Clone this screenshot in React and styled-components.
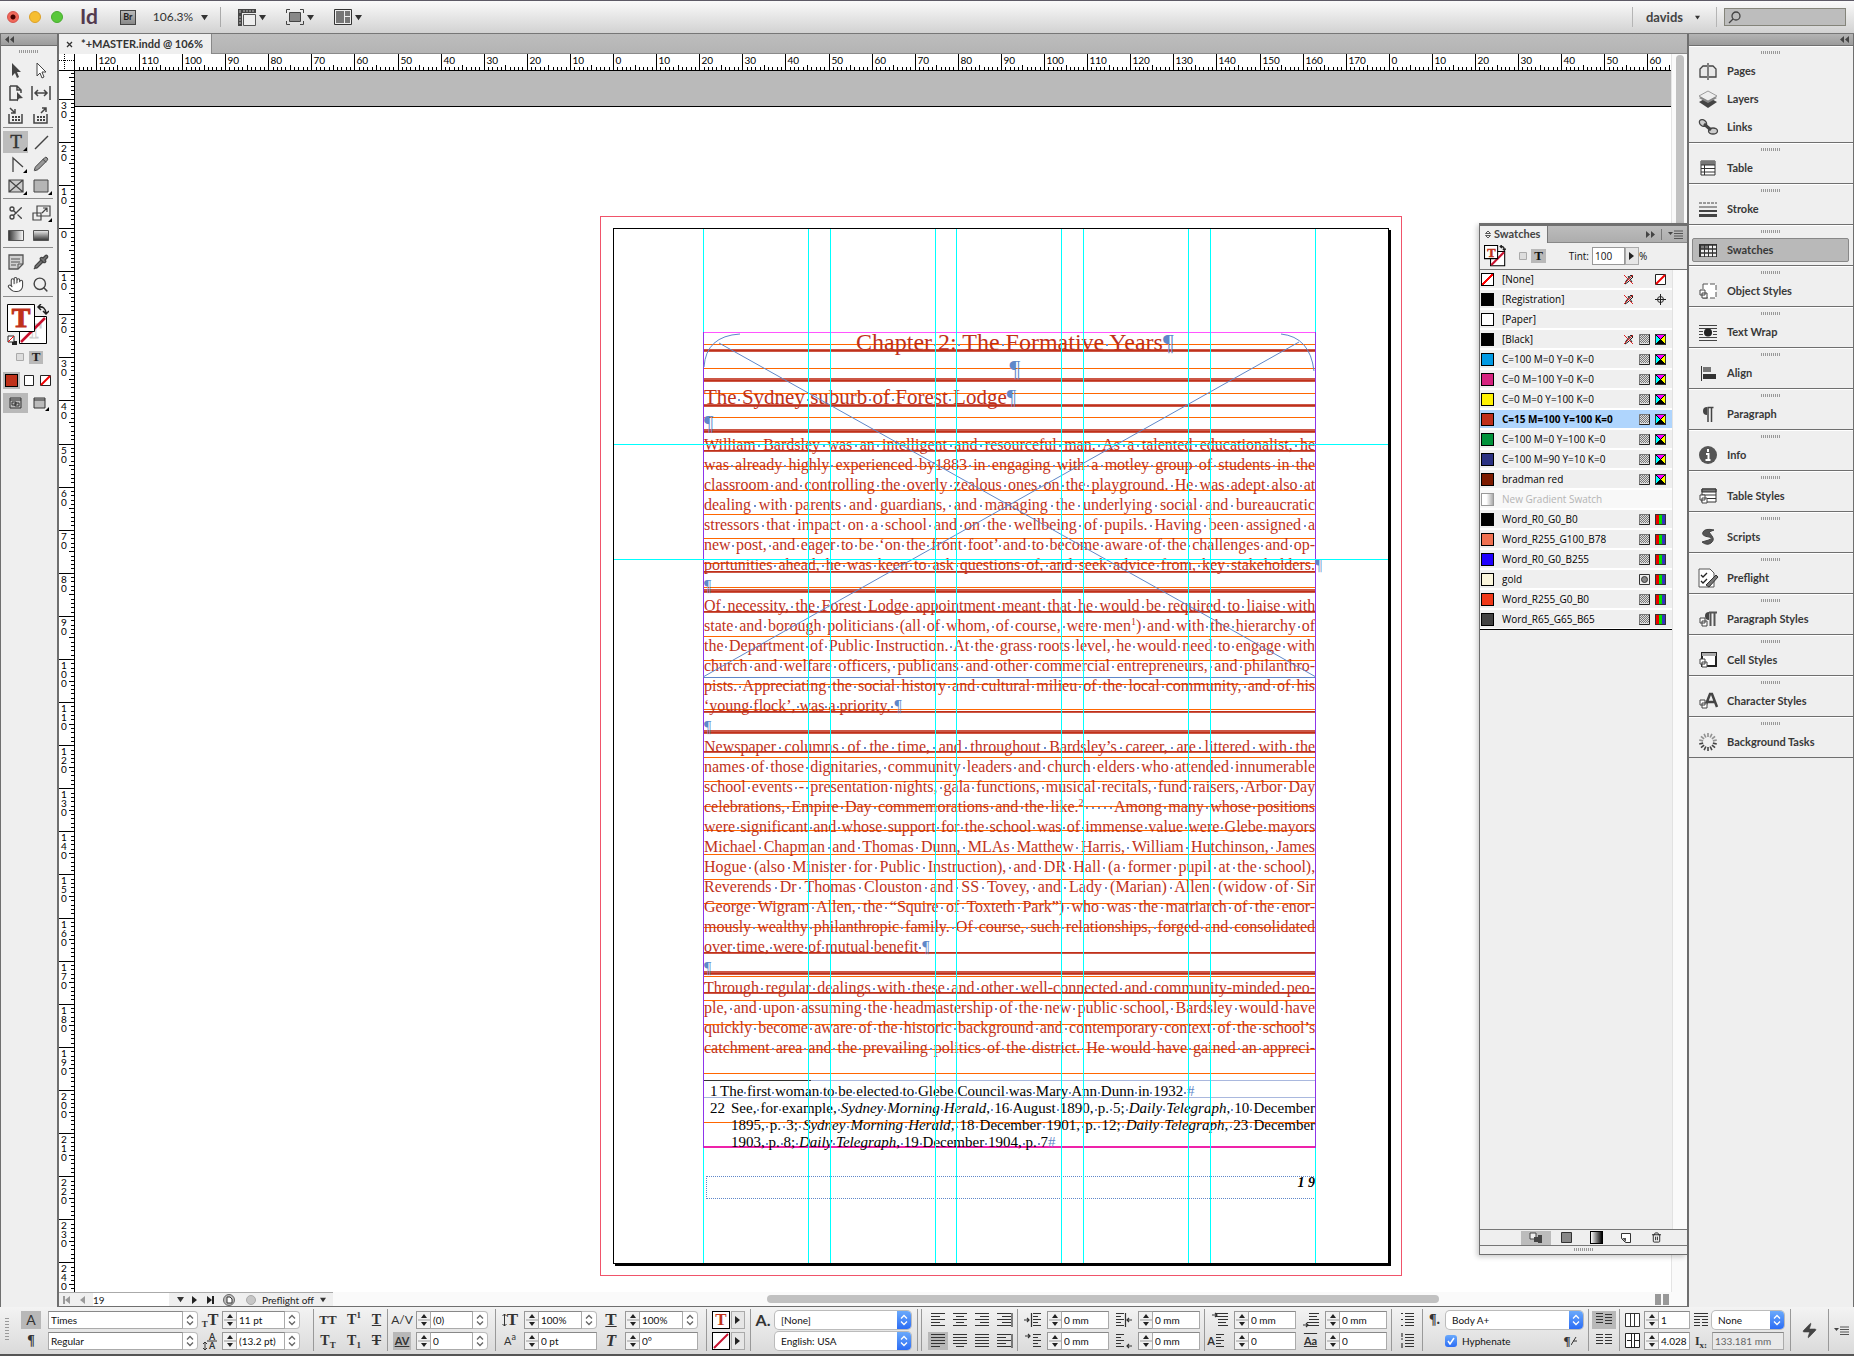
import React, { Fragment, useState } from 'react';
import styled, { createGlobalStyle, css } from 'styled-components';
import { Scissors, Pencil, Pipette, Hand, Search, Trash2, Zap } from 'lucide-react';

const UI = "Lato, 'Open Sans', sans-serif";
const SMALL = "'Open Sans', 'Noto Sans', sans-serif";
const SERIF = "'Liberation Serif', 'Times New Roman', serif";
const INK = '#bf311a';
const MARK = '#5f87c9';
const EDGE = '#6f6f6f';

const GlobalStyle = createGlobalStyle`
  * { box-sizing: border-box; }
  body { margin: 0; background: #efefef; font: 10px/12px ${UI}; color: #222; }
  button, input, select { font: inherit; color: inherit; margin: 0; padding: 0; border: 0; border-radius: 0; background: none; }
  svg { display: block; flex: none; }
  ul { list-style: none; margin: 0; padding: 0; }
`;

/* ---------- shell ---------- */
const Window = styled.div`
  display: grid;
  grid-template-rows: 33px minmax(0, 1fr) 49px;
  height: 100vh;
  border-top: 1px solid #5d5a66;
`;
const Middle = styled.div`
  display: flex;
  min-height: 0;
`;

/* ---------- title bar ---------- */
const TitleBar = styled.header`
  display: flex;
  align-items: center;
  padding: 0 8px 0 7px;
  background: linear-gradient(#fafafa, #d2d2d2);
  border-bottom: 1px solid #777;
`;
const Light = styled.button`
  width: 12px;
  height: 12px;
  margin-right: 10px;
  border-radius: 50%;
  border: 1px solid ${p => p.$edge};
  background: ${p => p.$color};
`;
const Logo = styled.span`
  margin: 0 22px 2px 7px;
  font: 700 21px/24px ${UI};
  color: #533a4e;
`;
const Bridge = styled.button`
  width: 16px;
  height: 15px;
  border: 1px solid #444;
  background: linear-gradient(#bbb, #888);
  font: 700 9px/12px ${UI};
`;
const Zoom = styled.button`
  display: flex;
  align-items: center;
  gap: 8px;
  margin-left: 17px;
  padding-right: 12px;
  height: 20px;
  border-right: 1px solid #aaa;
  font-size: 12px;
  color: #333;
`;
const ViewButton = styled.button`
  display: flex;
  align-items: center;
  gap: 3px;
  margin-left: 17px;
  & + & {
    margin-left: 20px;
  }
`;
const Account = styled.button`
  display: flex;
  align-items: center;
  gap: 12px;
  height: 20px;
  margin-left: auto;
  padding: 0 16px 0 13px;
  border: solid #b5b5b5;
  border-width: 0 1px;
  font: 700 13px/16px ${UI};
  color: #444;
`;
const SearchBox = styled.label`
  display: flex;
  align-items: center;
  width: 122px;
  height: 18px;
  margin-left: 7px;
  padding-left: 3px;
  border: 1px solid #84847a;
  background: #bdbdbd;
  input {
    flex: 1;
    min-width: 0;
    outline: none;
  }
`;

/* ---------- toolbox ---------- */
const Tools = styled.aside`
  width: 59px;
  flex: none;
  border-left: 1px solid ${EDGE};
  border-right: 2px solid ${EDGE};
  background: #efefef;
`;
const DockHead = styled.div`
  display: flex;
  align-items: center;
  justify-content: ${p => p.$side || 'flex-start'};
  height: 12px;
  padding: 0 4px;
  border-bottom: 1px solid ${EDGE};
  background: linear-gradient(#b4b4b4, #9c9c9c);
`;
const Grip = styled.div`
  width: 20px;
  height: 3px;
  margin: ${p => p.$margin || '0 auto'};
  background: repeating-linear-gradient(90deg, #999 0 1px, transparent 1px 2px);
`;
const ToolGroup = styled.div`
  display: grid;
  grid-template-columns: 25px 25px;
  grid-auto-rows: 22px;
  width: 50px;
  margin: 0 0 3px 2px;
  border-bottom: 1px solid #8d8d8d;
  padding-bottom: 1px;
`;
const Tool = styled.button`
  display: flex;
  align-items: center;
  justify-content: center;
  background: ${p => (p.$on ? '#bcbcbc' : 'none')};
  color: #444;
`;
const FillBox = styled.div`
  padding: 4px 0 0 6px;
  height: 47px;
`;
const ModeRow = styled.div`
  display: flex;
  height: ${p => p.$h}px;
  align-items: center;
  padding-left: ${p => p.$pad}px;
`;
const Mode = styled.button`
  display: flex;
  align-items: center;
  justify-content: center;
  width: ${p => p.$w}px;
  height: ${p => p.$h}px;
  background: ${p => (p.$on ? '#b9b9b9' : 'none')};
  font: 700 13px/12px ${SERIF};
`;

/* ---------- workspace ---------- */
const Workspace = styled.main`
  position: relative;
  display: grid;
  grid-template-rows: 20px minmax(0, 1fr) 15px;
  flex: 1;
  min-width: 0;
`;
const TabBar = styled.div`
  display: flex;
  background: linear-gradient(#bdbdbd, #b4b4b4);
  border-bottom: 1px solid #8a8a8a;
`;
const Tab = styled.div`
  display: flex;
  align-items: center;
  gap: 8px;
  height: 20px;
  padding: 0 8px 0 7px;
  border-right: 1px solid #888;
  background: #efefef;
  font: 700 11px/14px ${UI};
  color: #333;
`;
const View = styled.div`
  display: grid;
  grid-template-columns: 16px minmax(0, 1fr) 16px;
  grid-template-rows: 17px minmax(0, 1fr);
`;
const Corner = styled.div`
  background: #fff;
  border: solid #000;
  border-width: 0 1px 1px 0;
`;
const TopRuler = styled.div`
  background: #fff;
  border-bottom: 1px solid #000;
  svg {
    width: 100%;
    height: 16px;
  }
`;
const SideRuler = styled.div`
  background: #fff;
  border-right: 1px solid #000;
  svg {
    width: 15px;
    height: 100%;
  }
`;
const ScrollTrack = styled.div`
  grid-column: 3;
  grid-row: 1 / 3;
  padding: 1px 4px;
  border-left: 1px solid #e4e4e4;
  background: #fafafa;
`;
const VThumb = styled.div`
  width: 8px;
  height: 260px;
  border-radius: 4px;
  background: #c1c1c1;
`;
const Pasteboard = styled.div`
  position: relative;
  overflow: hidden;
  background: linear-gradient(#bababa 35px, #000 35px 36px, #fff 36px);
`;
const Spread = styled.div`
  position: absolute;
  left: 525px;
  top: 145px;
  width: 802px;
  height: 1060px;
  border: 1px solid #f0536a;
`;
const Page = styled.div`
  position: absolute;
  left: 12px;
  top: 11px;
  width: 776px;
  height: 1036px;
  border: 1px solid #000;
  box-shadow: 2px 2px 0 #000;
  background: #fff;
`;
const Overlay = styled.svg`
  position: absolute;
  left: 0;
  top: 0;
  pointer-events: none;
`;
const Story = styled.article`
  position: absolute;
  left: 89px;
  top: 103px;
  width: 613px;
  height: 816px;
  border: solid #8d35ea;
  border-width: 0 1px;
  font: 16px/20px ${SERIF};
  color: ${INK};
`;
const Title = styled.h1`
  margin: 0;
  font: 24px/21px ${SERIF};
  text-align: center;
`;
const Subtitle = styled.h2`
  margin: 0;
  font: 21px/28px ${SERIF};
`;
const Blank = styled.div`
  height: ${p => p.$h}px;
  font-size: ${p => p.$size}px;
  line-height: ${p => p.$h}px;
  text-align: ${p => p.$align || 'left'};
`;
const Mark = styled.span`
  display: inline-block;
  width: 0;
  color: ${MARK};
`;
const Space = styled.span`
  background: radial-gradient(circle at center, #6d8fd0 50%, transparent 60%) center 62% / 2px 2px no-repeat;
`;
const Para = styled.p`
  margin: 0;
`;
const Line = styled.span`
  display: block;
  height: 20px;
  white-space: nowrap;
  text-align: left;
  text-align-last: ${p => (p.$last ? 'left' : 'justify')};
  sup {
    font-size: 10px;
    line-height: 0;
    vertical-align: 6px;
  }
`;
const Notes = styled.ol`
  list-style: none;
  margin: 25px 0 0;
  padding: 0 0 0 6px;
  font: 15px/17px ${SERIF};
  color: #000;
`;
const Note = styled.li`
  display: grid;
  grid-template-columns: ${p => p.$indent}px minmax(0, 1fr);
  ${Line} {
    height: 17px;
  }
`;
const FolioBox = styled.div`
  position: absolute;
  left: 92px;
  top: 947px;
  width: 610px;
  height: 23px;
  border: 1px dotted ${MARK};
  font: italic 700 14px/12px ${SERIF};
  text-align: right;
  color: #000;
`;

/* ---------- status bar ---------- */
const Status = styled.div`
  display: flex;
  align-items: center;
  border-bottom: 1px solid ${EDGE};
  background: #fafafa;
`;
const StatusTools = styled.div`
  display: flex;
  align-items: center;
  width: 274px;
  height: 14px;
  padding-left: 4px;
  gap: 8px;
  border-top: 1px solid #aaa;
  background: #efefef;
  button {
    display: flex;
    align-items: center;
    gap: 6px;
  }
`;
const PageField = styled.input`
  width: 76px;
  height: 13px;
  background: #fff;
  outline: none;
`;
const HTrack = styled.div`
  flex: 1;
  padding-left: 434px;
`;
const HThumb = styled.div`
  width: 672px;
  height: 8px;
  border-radius: 4px;
  background: #c1c1c1;
`;
const SplitView = styled.div`
  width: 14px;
  height: 11px;
  margin-right: 18px;
  background: linear-gradient(90deg, #999 6px, transparent 6px 8px, #999 8px);
`;

/* ---------- swatches panel ---------- */
const Panel = styled.section`
  position: absolute;
  right: 0;
  top: 189px;
  bottom: 52px;
  display: flex;
  flex-direction: column;
  width: 208px;
  border: 1px solid ${EDGE};
  border-top-width: 3px;
  border-right: 0;
  background: #efefef;
  box-shadow: -2px 2px 5px rgba(0, 0, 0, 0.2);
`;
const PanelTabs = styled.div`
  display: flex;
  align-items: center;
  height: 17px;
  flex: none;
  padding-right: 4px;
  gap: 6px;
  background: linear-gradient(#bcbcbc, #adadad);
  border-bottom: 1px solid #888;
`;
const PanelTab = styled.h2`
  display: flex;
  align-items: center;
  gap: 3px;
  height: 17px;
  margin: 0 auto 0 0;
  padding: 0 7px 0 5px;
  border-right: 1px solid #777;
  background: #efefef;
  font: 700 11px/14px ${UI};
  color: #444;
`;
const PanelTools = styled.div`
  display: flex;
  align-items: center;
  height: 27px;
  flex: none;
  padding-left: 4px;
  border-bottom: 1px solid #777;
  font: 10px/12px ${SMALL};
  color: #111;
  label {
    margin: 0 3px 0 auto;
  }
  input {
    width: 33px;
    height: 18px;
    padding-left: 2px;
    border: 1px solid #999;
    background: #fff;
  }
`;
const Flyout = styled.button`
  display: flex;
  align-items: center;
  justify-content: center;
  width: 14px;
  height: 18px;
  border: 1px solid #aaa;
  background: #e6e6e6;
`;
const Percent = styled.span`
  width: 48px;
`;
const SwatchArea = styled.div`
  flex: 1;
  padding-right: 15px;
  background: linear-gradient(90deg, #efefef calc(100% - 15px), #e2e2e2 calc(100% - 15px) calc(100% - 14px), #fafafa calc(100% - 14px));
`;
const SwatchList = styled.ul`
  border-bottom: 1px solid #000;
  background: #fff;
`;
const SwatchRow = styled.button`
  display: grid;
  grid-template-columns: 21px minmax(0, 1fr) 16px 16px 16px;
  align-items: center;
  width: 100%;
  height: 18px;
  margin-bottom: 2px;
  padding: 0 1px;
  text-align: left;
  background: ${p => (p.$on ? '#afd5fd' : p.$dim ? '#f8f8f8' : '#efefef')};
  font: ${p => (p.$on ? 700 : 400)} 10px/12px ${SMALL};
  color: ${p => (p.$dim ? '#b4b4b4' : '#000')};
  li:last-child & {
    margin-bottom: 1px;
  }
`;
const Chip = styled.span`
  width: 13px;
  height: 13px;
  border: 1px solid ${p => (p.$dim ? '#999' : '#000')};
  background: ${p => p.$fill};
`;
const PanelFoot = styled.div`
  display: flex;
  align-items: center;
  height: 17px;
  flex: none;
  padding-left: 41px;
  border: solid #777;
  border-width: 1px 0;
`;
const FootButton = styled.button`
  display: flex;
  align-items: center;
  justify-content: center;
  width: 30px;
  height: 14px;
  background: ${p => (p.$on ? '#bcbcbc' : 'none')};
`;

/* ---------- dock ---------- */
const Dock = styled.nav`
  width: 167px;
  flex: none;
  border-left: 2px solid ${EDGE};
  border-right: 1px solid ${EDGE};
  background: #efefef;
`;
const DockGroup = styled.div`
  padding: 4px 4px 3px 3px;
  border-bottom: 1px solid ${EDGE};
  border-top: 1px solid #fff;
  height: ${p => (p.$tall ? 97 : 41)}px;
`;
const DockItem = styled.button`
  display: flex;
  align-items: center;
  gap: 7px;
  width: 100%;
  height: 24px;
  margin-bottom: 4px;
  padding-left: 5px;
  border: 1px solid ${p => (p.$on ? '#888' : 'transparent')};
  border-radius: 2px;
  background: ${p => (p.$on ? '#b9b9b9' : 'none')};
  font: 700 11px/14px ${UI};
  color: #383838;
  text-align: left;
`;
const DockGrip = styled(Grip)`
  margin-bottom: 5px;
`;

/* ---------- control bar ---------- */
const ControlBar = styled.footer`
  display: flex;
  align-items: stretch;
  padding: 2px 0 3px 0;
  border-bottom: 2px solid #555;
  background: linear-gradient(#f3f3f3, #dadada);
  overflow: hidden;
`;
const Group = styled.div`
  display: grid;
  grid-template-columns: ${p => p.$cols};
  grid-template-rows: 21px 21px;
  align-items: center;
  flex: none;
  padding: ${p => p.$pad || '0'};
  border-left: ${p => (p.$first ? 'none' : '1px solid #999')};
`;
const Field = styled.div`
  display: flex;
  align-items: center;
  height: 19px;
  input {
    flex: 1;
    min-width: 0;
    height: 18px;
    padding: 0 2px;
    border: 1px solid #aaa;
    border-top-color: #888;
    background: ${p => (p.$off ? '#e9e9e9' : '#fff')};
    color: ${p => (p.$off ? '#666' : '#111')};
    outline: none;
  }
`;
const arrows = css`
  display: flex;
  flex-direction: column;
  align-items: center;
  justify-content: center;
`;
const Spin = styled.button`
  ${arrows}
  width: 14px;
  height: 18px;
  border: 1px solid #999;
  border-right: 0;
  background: #f2f2f2;
`;
const Drop = styled.button`
  ${arrows}
  width: 15px;
  height: 18px;
  border: 1px solid #bbb;
  border-left: 0;
  border-radius: 0 4px 4px 0;
  background: #fff;
`;
const SelectWrap = styled.div`
  display: grid;
  align-items: center;
  height: 18px;
  border-radius: 4px;
  background: #fff;
  box-shadow: 0 0 0 1px #bbb;
  select {
    grid-area: 1 / 1;
    height: 18px;
    padding-left: 6px;
    appearance: none;
    outline: none;
    color: #111;
  }
`;
const SelectCap = styled.span`
  ${arrows}
  grid-area: 1 / 1;
  justify-self: end;
  width: 14px;
  height: 18px;
  border-radius: 0 4px 4px 0;
  background: linear-gradient(#6aa9fb, #2c6df5);
  pointer-events: none;
`;
const Glyph = styled.button`
  display: flex;
  align-items: center;
  justify-content: center;
  justify-self: center;
  width: ${p => p.$w || 20}px;
  height: 18px;
  background: ${p => (p.$on ? '#b8b8b8' : 'none')};
  font: ${p => p.$weight || 700} ${p => p.$size || 14}px/16px ${p => (p.$sans ? UI : SERIF)};
  font-style: ${p => (p.$italic ? 'italic' : 'normal')};
  text-decoration: ${p => p.$line || 'none'};
  color: #333;
  small {
    font-size: 9px;
    line-height: 9px;
    align-self: ${p => p.$sub || 'flex-end'};
  }
`;
const ColorButton = styled.button`
  display: flex;
  align-items: center;
  justify-content: center;
  width: 18px;
  height: 18px;
  border: 1px solid #000;
  background: #fff;
  font: 700 17px/16px ${SERIF};
  color: ${INK};
`;
const Check = styled.label`
  display: flex;
  align-items: center;
  gap: 5px;
  color: #111;
  input {
    appearance: none;
    width: 12px;
    height: 12px;
    border-radius: 3px;
    background: linear-gradient(#6aa9fb, #2c6df5);
    grid-area: 1 / 1;
  }
  svg {
    grid-area: 1 / 1;
    pointer-events: none;
  }
`;
const Tick = styled.span`
  display: grid;
  place-items: center;
`;
const HyphenRow = styled.div`
  grid-column: 1 / 3;
  display: flex;
  align-items: center;
  justify-content: space-between;
  padding: 0 3px 0 22px;
`;
const ColumnIcon = styled.div`
  display: flex;
  justify-content: center;
`;
const Tall = styled.div`
  grid-row: 1 / 3;
  display: flex;
  justify-content: center;
`;
const VGrip = styled.div`
  width: 4px;
  height: 24px;
  background: repeating-linear-gradient(#999 0 1px, transparent 1px 3px);
`;

/* ---------- small drawings ---------- */
const Down = ({ s = 7 }) => (
  <svg width={s} height={s} viewBox="0 0 8 8"><path d="M0 1h8L4 7z" fill="#333" /></svg>
);
const Right = ({ bar, dim, flip }) => (
  <svg width="7" height="8" viewBox="0 0 7 8">
    <g fill={dim ? '#999' : '#222'} transform={flip ? 'matrix(-1 0 0 1 7 0)' : undefined}>
      <path d="M0 0l5 4-5 4z" />
      {bar && <path d="M5 0h2v8H5z" />}
    </g>
  </svg>
);
const Double = ({ flip }) => (
  <svg width="9" height="7" viewBox="0 0 9 7">
    <path d="M0 0l4 3.500-4 3.500zM5 0l4 3.500-4 3.500z" fill="#444" transform={flip ? 'matrix(-1 0 0 1 9 0)' : undefined} />
  </svg>
);
const Chevrons = ({ color = '#666' }) => (
  <svg width="8" height="12" viewBox="0 0 8 12" fill="none" stroke={color} strokeWidth="1.300">
    <path d="M1 4.500l3-3 3 3M1 7.500l3 3 3-3" />
  </svg>
);
const SpinArrows = () => (
  <svg width="12" height="16" viewBox="0 0 12 16">
    <path d="M6 2l3 4H3zM6 14l3-4H3z" fill="#222" />
    <path d="M0 8h12" stroke="#999" />
  </svg>
);
const MenuIcon = () => (
  <svg width="15" height="9" viewBox="0 0 15 9">
    <path d="M0 2h5L2.500 5z" fill="#444" />
    <path d="M6 1h9M6 3.500h9M6 6h9M6 8.500h9" stroke="#555" />
  </svg>
);
// rows: [x, width] of each stroke on an 18px wide text block
const Lines = ({ rows, gap = 3, extra }) => (
  <svg width="18" height="16" viewBox="0 0 18 16" stroke="#333" fill="none">
    {rows.map(([x, w], i) => <path key={i} d={`M${x} ${i * gap + 1.5}h${w}`} />)}
    {extra && <path d={extra} strokeWidth="1.200" />}
  </svg>
);
const LEFT = [[2, 14], [2, 9], [2, 14], [2, 9], [2, 14]];
const CENTER = [[2, 14], [5, 8], [2, 14], [5, 8], [2, 14]];
const RIGHT = [[2, 14], [7, 9], [2, 14], [7, 9], [2, 14]];
const FULL = [[2, 14], [2, 14], [2, 14], [2, 14], [2, 14]];
const JLEFT = [[2, 14], [2, 14], [2, 14], [2, 14], [2, 9]];
const JCENTER = [[2, 14], [2, 14], [2, 14], [2, 14], [5, 8]];
const INDENT = [[9, 8], [9, 5], [9, 8], [9, 5], [9, 8]];
const OUTDENT = [[1, 8], [1, 5], [1, 8], [1, 5], [1, 8]];

const tools = {
  select: <path d="M8 3v13l3-3 2 5 2-1-2-5h4z" fill="#444" />,
  direct: <path d="M8 3v13l3-3 2 5 2-1-2-5h4z" fill="#fff" stroke="#444" />,
  page: <><path d="M6 4h7l4 4v3M6 4v14h8M13 4v4h4" fill="none" stroke="#444" strokeWidth="1.500" /><path d="M13 10l6 6-4 .5-2 3z" fill="#444" /></>,
  gap: <path d="M3 4v14M21 4v14M6 11h12M9 8l-3 3 3 3M15 8l3 3-3 3" fill="none" stroke="#444" strokeWidth="1.500" />,
  collect: <><path d="M5 10v9h13v-9M6 4l5 5M11 5v4H7" fill="none" stroke="#444" strokeWidth="1.500" /><path d="M8 13h8M8 16h8" stroke="#444" strokeWidth="2" strokeDasharray="2 1" /></>,
  place: <><path d="M5 10v9h13v-9M12 9l5-5M13 4h4v4" fill="none" stroke="#444" strokeWidth="1.500" /><path d="M8 13h8M8 16h8" stroke="#444" strokeWidth="2" strokeDasharray="2 1" /></>,
  line: <path d="M6 18L19 5" stroke="#444" strokeWidth="1.500" />,
  pen: <path d="M9 19V5l10 9" fill="none" stroke="#444" strokeWidth="1.300" />,
  frame: <path d="M5 5h14v12H5zM5 5l14 12M19 5L5 17" fill="#ccc" stroke="#444" strokeWidth="1.200" />,
  rect: <path d="M5 5h14v12H5z" fill="#b5b5b5" stroke="#444" />,
  transform: <path d="M8 4h13v10H8zM4 11h8v7H4zM13 11l5-5M14 6h4v4" fill="none" stroke="#444" strokeWidth="1.200" />,
  note: <><path d="M5 4h14v9l-5 5H5z" fill="#d0d0d0" stroke="#555" strokeWidth="1.300" /><path d="M14 18v-5h5M7 8h9M7 11h9M7 14h5" fill="none" stroke="#555" /></>,
};
const ToolIcon = ({ name, more }) => (
  <svg width="24" height="22" viewBox="0 0 24 22">
    {tools[name]}
    {more && <path d="M23 16v4h-4z" fill="#000" />}
  </svg>
);
const Gradient = ({ fade }) => (
  <svg width="16" height="11" viewBox="0 0 16 11">
    <defs>
      <linearGradient id={fade ? 'gf' : 'gs'} x2={fade ? 0 : 1} y2={fade ? 1 : 0}>
        <stop stopColor={fade ? '#eee' : '#333'} /><stop offset="1" stopColor={fade ? '#333' : '#fff'} />
      </linearGradient>
    </defs>
    <path d="M.5.5h15v10H.5z" fill={`url(#${fade ? 'gf' : 'gs'})`} stroke="#555" />
  </svg>
);
const FillStroke = ({ size = 42, bare }) => (
  <svg width={size} height={size} viewBox="0 0 42 42">
    <path d="M12.500 12.500h27v27h-27z" fill="#fff" stroke="#000" strokeWidth={bare ? 2 : 1} />
    {!bare && <text x="27" y="34" textAnchor="middle" fontFamily={SERIF} fontSize="22" fontWeight="700" fill="none" stroke="#ccc">T</text>}
    <path d="M14 38l24-24" stroke="#c8102e" strokeWidth={bare ? 4 : 2.5} />
    <path d={bare ? 'M1 1h25v25H1z' : 'M.5.5h27v27H.5z'} fill="#fff" stroke="#000" strokeWidth={bare ? 2 : 1} />
    <text x="14" y={bare ? 22 : 23} textAnchor="middle" fontFamily={SERIF} fontSize={bare ? 24 : 28} fontWeight="700" fill={INK} stroke={INK}>T</text>
    <path d="M32 3q6-1 7 6M34 0l-3 3 3 3M36 7l3 3 3-3" fill="none" stroke="#222" strokeWidth={bare ? 2.5 : 1.5} />
    {!bare && (
      <>
        <path d="M5 37h5v4H5z" fill="#222" />
        <path d="M1 32h6v6H1z" fill="#fff" stroke="#222" />
        <path d="M1 38l6-6" stroke="red" />
      </>
    )}
  </svg>
);
const Slash = () => (
  <svg width="11" height="11" viewBox="0 0 11 11"><path d="M.5.5h10v10H.5z" fill="#fff" stroke="#222" /><path d="M1 10l9-9" stroke="#e00" strokeWidth="2" /></svg>
);
const NoEdit = () => (
  <svg width="11" height="11" viewBox="0 0 11 11" fill="none"><path d="M2 10l1-3 5-6 2 2-5 5zM5 2l4 6" stroke="#222" /><path d="M1 1l9 9M10 1l-9 9" stroke="#d22" /></svg>
);
const Target = () => (
  <svg width="11" height="11" viewBox="0 0 11 11" fill="none" stroke="#222"><circle cx="5.500" cy="5.500" r="3" /><path d="M5.500 0v11M0 5.500h11" /></svg>
);
const Process = () => (
  <svg width="11" height="11" viewBox="0 0 11 11">
    <path d="M0 0h11v11H0z" fill="#ddd" />
    <path d="M1 1.500h9M1 3.500h9M1 5.500h9M1 7.500h9" stroke="#777" strokeDasharray="1 1" />
    <path d="M2 2.500h8M2 4.500h8M2 6.500h8M2 8.500h8" stroke="#777" strokeDasharray="1 1" />
    <path d="M0 10.500h10.500V0" stroke="#222" fill="none" />
    <path d="M10.500.5H.5v10" stroke="#777" fill="none" />
  </svg>
);
const Spot = () => (
  <svg width="11" height="11" viewBox="0 0 11 11"><path d="M.5.5h10v10H.5z" fill="#eee" stroke="#333" /><circle cx="5.500" cy="5.500" r="3" fill="#888" stroke="#333" /></svg>
);
const Cmyk = () => (
  <svg width="11" height="11" viewBox="0 0 11 11">
    <path d="M0 0l5.500 5.500L0 11z" fill="#0ff" /><path d="M0 0h11L5.500 5.500z" fill="#f0f" />
    <path d="M11 0v11L5.500 5.500z" fill="#ff0" /><path d="M0 11h11L5.500 5.500z" fill="#000" />
    <path d="M0 0l11 11M11 0L0 11" stroke="#000" />
    <path d="M.5.5h10v10H.5z" fill="none" stroke="#333" />
  </svg>
);
const Rgb = () => (
  <svg width="11" height="11" viewBox="0 0 11 11">
    <path d="M0 0h4v11H0z" fill="#e00" /><path d="M4 0h3v11H4z" fill="#0d0" /><path d="M7 0h4v11H7z" fill="#33b" />
    <path d="M.5.5h10v10H.5z" fill="none" stroke="#333" />
  </svg>
);

const badge = <path d="M4 12h5v5H4z M2 9h5v5H2z" fill="#fff" stroke="#444" />;
const dockIcons = {
  Pages: <path d="M10 2v17M9 5H5L2 8v8h7M11 5h4l3 3v8h-7" fill="#e8e8e8" stroke="#444" strokeWidth="1.300" />,
  Layers: <><path d="M1 13l9-5 9 5-9 6z" fill="#444" /><path d="M1 9l9-5 9 5-9 5z" fill="#888" /><path d="M1 7l9-5 9 5-9 5z" fill="#eee" stroke="#777" strokeWidth=".7" /></>,
  Links: <g fill="#ccc" stroke="#444" strokeWidth="1.300"><ellipse cx="5" cy="6" rx="4" ry="3" transform="rotate(40 5 6)" /><ellipse cx="15" cy="14" rx="4.500" ry="3" /><path d="M6 7l7 6" strokeWidth="3" /></g>,
  Table: <><path d="M3 3h14v14H3z" fill="#fff" stroke="#333" /><path d="M3 3h14v4H3z" fill="#777" /><path d="M3 7h14M3 10.500h14M3 14h14M6.500 7v10" stroke="#333" /></>,
  Stroke: <g stroke="#444"><path d="M1 4h18" strokeDasharray="3 1" /><path d="M1 8h18" /><path d="M1 12h18" strokeWidth="2" /><path d="M1 16.500h18" strokeWidth="3" /></g>,
  Swatches: <><path d="M1 4h18v13H1z" fill="#333" /><path d="M3 7h15M3 11h15M3 15h15" stroke="#eee" strokeWidth="2.500" strokeDasharray="3 1" /><path d="M2 5h8v4H2z" fill="#333" opacity=".6" /></>,
  'Object Styles': <><path d="M5 3h13v14H5z" fill="#fff" stroke="#555" strokeDasharray="5 2" />{badge}</>,
  'Text Wrap': <><path d="M1 3.500h18M1 6.500h18M1 9.500h4M15 9.500h4M1 12.500h4M15 12.500h4M1 15.500h18M1 18.500h18" stroke="#444" /><circle cx="10" cy="10.500" r="4" fill="#222" /></>,
  Align: <><path d="M3.500 3v15" stroke="#333" /><path d="M5 4h8v5H5z" fill="#777" /><path d="M5 11h13v5H5z" fill="#333" /></>,
  Paragraph: <><path d="M9 3a4 4 0 000 8z" fill="#444" /><path d="M9.500 3.500h6M10 3v15M13.500 3v15" stroke="#444" fill="none" strokeWidth="1.500" /></>,
  Info: <><circle cx="10" cy="10" r="9" fill="#555" /><path d="M10 4v3M8 9h2.500v6M7.500 15h5" stroke="#fff" strokeWidth="2" fill="none" /></>,
  'Table Styles': <><path d="M4 3h14v13H4z" fill="#fff" stroke="#333" /><path d="M4 3h14v3H4zM4 9h14M4 12.500h14" fill="#777" stroke="#333" />{badge}</>,
  Scripts: <path d="M16 3q-9-2-11 2t6 5-7 5q5 4 9 1t1-7-3-4z" fill="#555" stroke="#444" />,
  Preflight: <><path d="M1 1h11l4 4v14H1z" fill="#fff" stroke="#555" /><path d="M3 7l2 2 4-4M3 13l2 2 4-4" fill="none" stroke="#222" strokeWidth="1.300" /><path d="M8 17L18 7l2 2-9 10z" fill="#777" stroke="#333" /></>,
  'Paragraph Styles': <><path d="M11 3a4 4 0 000 8z" fill="#444" /><path d="M12.500 3v14M16.500 3v14M11 3.500h8" stroke="#555" strokeWidth="2" />{badge}</>,
  'Cell Styles': <><path d="M4 3h14v13H4z" fill="#fff" stroke="#222" strokeWidth="2" /><path d="M4 3h14v3H4z" fill="#aaa" />{badge}</>,
  'Character Styles': <><path d="M7 16L12 3h2l5 13M9 11h8" fill="none" stroke="#444" strokeWidth="2.500" />{badge}</>,
  'Background Tasks': (
    <g stroke="#444" strokeWidth="1.600">
      {Array.from({ length: 14 }, (_, i) => (
        <path key={i} d="M10 1v4" transform={`rotate(${i * 25.7} 10 10)`} opacity={i > 3 && i < 11 ? 1 : 0.55} />
      ))}
    </g>
  ),
};

/* ---------- data ---------- */
const dockGroups = [
  ['Pages', 'Layers', 'Links'], ['Table'], ['Stroke'], ['Swatches'], ['Object Styles'], ['Text Wrap'], ['Align'],
  ['Paragraph'], ['Info'], ['Table Styles'], ['Scripts'], ['Preflight'], ['Paragraph Styles'], ['Cell Styles'],
  ['Character Styles'], ['Background Tasks'],
];

const noneFill = 'linear-gradient(135deg, #fff 44%, #f00 44% 56%, #fff 56%)';
const swatches = [
  { name: '[None]', fill: noneFill, lock: true, end: Slash },
  { name: '[Registration]', fill: '#000', lock: true, end: Target },
  { name: '[Paper]', fill: '#fff' },
  { name: '[Black]', fill: '#000', lock: true, mid: Process, end: Cmyk },
  { name: 'C=100 M=0 Y=0 K=0', fill: '#009ae4', mid: Process, end: Cmyk },
  { name: 'C=0 M=100 Y=0 K=0', fill: '#d6227f', mid: Process, end: Cmyk },
  { name: 'C=0 M=0 Y=100 K=0', fill: '#fff100', mid: Process, end: Cmyk },
  { name: 'C=15 M=100 Y=100 K=0', fill: '#bf2f1c', mid: Process, end: Cmyk },
  { name: 'C=100 M=0 Y=100 K=0', fill: '#00923a', mid: Process, end: Cmyk },
  { name: 'C=100 M=90 Y=10 K=0', fill: '#2a3182', mid: Process, end: Cmyk },
  { name: 'bradman red', fill: '#7d1b00', mid: Process, end: Cmyk },
  { name: 'New Gradient Swatch', fill: 'linear-gradient(90deg, #fff 40%, #aaa)', dim: true },
  { name: 'Word_R0_G0_B0', fill: '#000', mid: Process, end: Rgb },
  { name: 'Word_R255_G100_B78', fill: '#f07050', mid: Process, end: Rgb },
  { name: 'Word_R0_G0_B255', fill: '#1f00ff', mid: Process, end: Rgb },
  { name: 'gold', fill: '#fbf6dc', mid: Spot, end: Rgb },
  { name: 'Word_R255_G0_B0', fill: '#f03818', mid: Process, end: Rgb },
  { name: 'Word_R65_G65_B65', fill: '#414141', mid: Process, end: Rgb },
];

const paragraphs = [
  [
    'William Bardsley was an intelligent and resourceful man. As a talented educationalist, he',
    'was already highly experienced by1883 in engaging with a motley group of students in the',
    'classroom and controlling the overly zealous ones on the playground. He was adept also at',
    'dealing with parents and guardians, and managing the underlying social and bureaucratic',
    'stressors that impact on a school and on the wellbeing of pupils. Having been assigned a',
    'new post, and eager to be ‘on the front foot’ and to become aware of the challenges and op-',
    'portunities ahead, he was keen to ask questions of, and seek advice from, key stakeholders.',
  ],
  [
    'Of necessity, the Forest Lodge appointment meant that he would be required to liaise with',
    'state and borough politicians (all of whom, of course, were men^1^) and with the hierarchy of',
    'the Department of Public Instruction. At the grass roots level, he would need to engage with',
    'church and welfare officers, publicans and other commercial entrepreneurs, and philanthro-',
    'pists. Appreciating the social history and cultural milieu of the local community, and of his',
    '‘young flock’, was a priority. ',
  ],
  [
    'Newspaper columns of the time, and throughout Bardsley’s career, are littered with the',
    'names of those dignitaries, community leaders and church elders who attended innumerable',
    'school events - presentation nights, gala functions, musical recitals, fund raisers, Arbor Day',
    'celebrations, Empire Day commemorations and the like.^2^     Among many whose positions',
    'were significant and whose support for the school was of immense value were Glebe mayors',
    'Michael Chapman and Thomas Dunn, MLAs Matthew Harris, William Hutchinson, James',
    'Hogue (also Minister for Public Instruction), and DR Hall (a former pupil at the school),',
    'Reverends Dr Thomas Clouston and SS Tovey, and Lady (Marian) Allen (widow of Sir',
    'George Wigram Allen, the “Squire of Toxteth Park”) who was the matriarch of the enor-',
    'mously wealthy philanthropic family. Of course, such relationships, forged and consolidated',
    'over time, were of mutual benefit ',
  ],
  [
    'Through regular dealings with these and other well-connected and community-minded peo-',
    'ple, and upon assuming the headmastership of the new public school, Bardsley would have',
    'quickly become aware of the historic background and contemporary context of the school’s',
    'catchment area and the prevailing politics of the district. He would have gained an appreci-',
  ],
];

// guide geometry, measured from the page's top left corner
const columnGuides = [89, 194, 216, 321, 342, 447, 469, 574, 596, 701];
const rowGuides = [215, 330];
const baselines = Array.from({ length: 34 }, (_, i) => Math.round(115 + i * 24.3));
const rules = [
  [120, 3], [149, 4], [175, 3], [200, 4], [221, 2], [342, 2], [360, 4], [382, 2], [482, 2], [501, 4], [522, 2], [723, 2],
  [742, 4], [763, 2],
];

/* ---------- pieces ---------- */
const Words = ({ text }) =>
  text.split(' ').map((word, i) => (
    <Fragment key={i}>
      {i > 0 && <Space>{word === '' ? '\u00a0' : ' '}</Space>}
      {word.split('^').map((part, k) => (k % 2 ? <sup key={k}>{part}</sup> : part))}
    </Fragment>
  ));

const Ruler = ({ vertical, origin, from, to, wrap }) => {
  const ticks = [];
  for (let mm = from; mm <= to; mm += 1) {
    const pos = Math.round(origin + mm * 4.31) + 0.5;
    const major = mm % 10 === 0;
    const size = major ? 16 : mm % 5 === 0 ? 5 : 3;
    ticks.push(
      <path key={mm} d={vertical ? `M${15 - size} ${pos}h${size}` : `M${pos} ${16 - size}v${size}`} stroke="#000" />,
    );
    if (major) {
      const value = String(Math.abs(wrap && mm >= wrap ? mm - wrap : mm));
      if (vertical) {
        value.split('').forEach((digit, k) => {
          ticks.push(<text key={`${mm}-${k}`} x="2" y={pos + 9 + k * 9}>{digit}</text>);
        });
      } else {
        ticks.push(<text key={`t${mm}`} x={pos + 2} y="10">{value}</text>);
      }
    }
  }
  return <svg fontFamily={UI} fontSize="10" fill="#000">{ticks}</svg>;
};

const Spinner = ({ label, value, drop }) => (
  <Field>
    <Spin aria-label={`${label} step`}><SpinArrows /></Spin>
    <input aria-label={label} defaultValue={value} />
    {drop && <Drop aria-label={`${label} list`}><Chevrons /></Drop>}
  </Field>
);
const Select = ({ label, value }) => (
  <SelectWrap>
    <select aria-label={label} defaultValue={value}><option>{value}</option></select>
    <SelectCap><Chevrons color="#fff" /></SelectCap>
  </SelectWrap>
);
const Combo = ({ label, value }) => (
  <Field>
    <input aria-label={label} defaultValue={value} />
    <Drop aria-label={`${label} list`}><Chevrons /></Drop>
  </Field>
);

const Toolbox = () => (
  <Tools>
    <DockHead><Double flip /></DockHead>
    <Grip $margin="4px auto 7px 18px" />
    <ToolGroup>
      <Tool aria-label="Selection"><ToolIcon name="select" /></Tool>
      <Tool aria-label="Direct selection"><ToolIcon name="direct" /></Tool>
      <Tool aria-label="Page"><ToolIcon name="page" /></Tool>
      <Tool aria-label="Gap"><ToolIcon name="gap" /></Tool>
      <Tool aria-label="Content collector"><ToolIcon name="collect" /></Tool>
      <Tool aria-label="Content placer"><ToolIcon name="place" /></Tool>
    </ToolGroup>
    <ToolGroup>
      <Tool aria-label="Type" $on>
        <svg width="24" height="22" viewBox="0 0 24 22">
          <text x="12" y="17" textAnchor="middle" fontFamily={SERIF} fontSize="19" fill="#333" stroke="#333" strokeWidth=".4">T</text>
          <path d="M23 16v4h-4z" />
        </svg>
      </Tool>
      <Tool aria-label="Line"><ToolIcon name="line" /></Tool>
      <Tool aria-label="Pen"><ToolIcon name="pen" more /></Tool>
      <Tool aria-label="Pencil"><Pencil size={16} fill="#999" strokeWidth={1.5} /></Tool>
      <Tool aria-label="Rectangle frame"><ToolIcon name="frame" more /></Tool>
      <Tool aria-label="Rectangle"><ToolIcon name="rect" more /></Tool>
    </ToolGroup>
    <ToolGroup>
      <Tool aria-label="Scissors"><Scissors size={16} /></Tool>
      <Tool aria-label="Free transform"><ToolIcon name="transform" more /></Tool>
      <Tool aria-label="Gradient swatch"><Gradient /></Tool>
      <Tool aria-label="Gradient feather"><Gradient fade /></Tool>
    </ToolGroup>
    <ToolGroup>
      <Tool aria-label="Note"><ToolIcon name="note" /></Tool>
      <Tool aria-label="Eyedropper"><Pipette size={16} fill="#777" /></Tool>
      <Tool aria-label="Hand"><Hand size={17} strokeWidth={1.5} fill="#fff" /></Tool>
      <Tool aria-label="Zoom"><Search size={17} /></Tool>
    </ToolGroup>
    <FillBox><FillStroke /></FillBox>
    <ModeRow $h={20} $pad={10}>
      <Mode $w={18} $h={12} aria-label="Format container">
        <svg width="9" height="9"><path d="M.5.5h7v7h-7z" fill="#ddd" stroke="#aaa" /></svg>
      </Mode>
      <Mode $w={14} $h={13} $on>T</Mode>
    </ModeRow>
    <ModeRow $h={26} $pad={2}>
      <Mode $w={17} $h={17} $on aria-label="Apply colour"><Chip $fill={INK} /></Mode>
      <Mode $w={17} $h={17} aria-label="Apply gradient">
        <svg width="10" height="11"><path d="M.5.5h9v10h-9z" fill="#fff" stroke="#222" /></svg>
      </Mode>
      <Mode $w={17} $h={17} aria-label="Apply none"><Slash /></Mode>
    </ModeRow>
    <ModeRow $h={20} $pad={2}>
      <Mode $w={25} $h={20} $on aria-label="Normal view">
        <svg width="13" height="12" viewBox="0 0 13 12" fill="none" stroke="#333"><path d="M1 1h11v10H1zM1 3h11M3 5h4v3H3zM6 6h4v3H6z" /></svg>
      </Mode>
      <Mode $w={25} $h={20} aria-label="Preview">
        <svg width="17" height="16" viewBox="0 0 17 16"><path d="M2 3h11v10H2z" fill="#bbb" stroke="#333" /><path d="M2 5h11" stroke="#333" /><path d="M17 12v4h-4z" /></svg>
      </Mode>
    </ModeRow>
  </Tools>
);

const DocumentPage = () => (
  <Spread>
    <Page>
      <Overlay width="774" height="1034">
        <g stroke="#f60">{baselines.map(y => <path key={y} d={`M89 ${y + 0.5}h613`} />)}</g>
        {rules.map(([y, h]) => (
          <g key={y}>
            <path d={`M89 ${y}h613v${h}h-613z`} fill="#cc5746" />
            <path d={`M89 ${y + h - 1.5}h613`} stroke={INK} />
          </g>
        ))}
        <path d="M89 103.500h613" stroke="#f5f" />
        <path d="M89 918h613" stroke="#e2a" strokeWidth="2" />
        <path d="M89 448.500h613" stroke={MARK} />
        <path d="M197 851.500h505M89 868.500h613" stroke="#a9b8de" />
        <path d="M89 851.500h108" stroke="#333" />
      </Overlay>
      <Story>
        <Title><Words text="Chapter 2: The Formative Years" /><Mark>¶</Mark></Title>
        <Blank $h={30} $size={24} $align="center"><Mark>¶</Mark></Blank>
        <Subtitle><Words text="The Sydney suburb of Forest Lodge" /><Mark>¶</Mark></Subtitle>
        <Blank $h={24} $size={21}><Mark>¶</Mark></Blank>
        {paragraphs.map((lines, i) => (
          <Fragment key={lines[0]}>
            {i > 0 && <Blank $h={21} $size={16}><Mark>¶</Mark></Blank>}
            <Para>
              {lines.map((line, k) => (
                <Line key={line} $last={line.length < 50}>
                  <Words text={line} />
                  {k === lines.length - 1 && i < 3 && <Mark>¶</Mark>}
                </Line>
              ))}
            </Para>
          </Fragment>
        ))}
        <Notes>
          <Note $indent={10}>
            <span>1</span>
            <Line $last><Words text="The first woman to be elected to Glebe Council was Mary Ann Dunn in 1932 " /><Mark>#</Mark></Line>
          </Note>
          <Note $indent={21}>
            <span>22</span>
            <div>
              <Line><Words text="See, for example," /><Space> </Space><i><Words text="Sydney Morning Herald" /></i><Words text=", 16 August 1890, p. 5; " /><i><Words text="Daily Telegraph" /></i><Words text=", 10 December" /></Line>
              <Line><Words text="1895, p. 3; " /><i><Words text="Sydney Morning Herald" /></i><Words text=", 18 December 1901, p. 12; " /><i><Words text="Daily Telegraph" /></i><Words text=", 23 December" /></Line>
              <Line $last><Words text="1903, p. 8; " /><i><Words text="Daily Telegraph" /></i><Words text=", 19 December 1904, p. 7" /><Mark>#</Mark></Line>
            </div>
          </Note>
        </Notes>
      </Story>
      <FolioBox>1 9</FolioBox>
      <Overlay width="774" height="1034" fill="none">
        <g stroke={MARK}>
          <path d="M90 138Q92 107 126 105M700 142Q696 108 667 105" />
          <path d="M105 114L702 448M685 113L89 448" />
        </g>
        <g stroke="#0ff">
          {columnGuides.map(x => <path key={x} d={x === 89 || x === 701 ? `M${x + 0.5} 0v103M${x + 0.5} 919v115` : `M${x + 0.5} 0v1034`} />)}
          {rowGuides.map(y => <path key={y} d={`M0 ${y + 0.5}h774`} />)}
        </g>
      </Overlay>
    </Page>
  </Spread>
);

const SwatchesPanel = () => {
  const [active, setActive] = useState('C=15 M=100 Y=100 K=0');
  return (
    <Panel>
      <PanelTabs>
        <PanelTab>
          <svg width="6" height="9" viewBox="0 0 6 9" fill="none" stroke="#555"><path d="M.5 3.500L3 1l2.500 2.500zM.5 5.500L3 8l2.500-2.500z" /></svg>
          Swatches
        </PanelTab>
        <Double />
        <svg width="1" height="11"><path d="M.5 0v11" stroke="#777" /></svg>
        <MenuIcon />
      </PanelTabs>
      <PanelTools>
        <FillStroke size={22} bare />
        <Mode $w={25} $h={14} aria-label="Container">
          <svg width="16" height="9"><path d="M8.500.5h7v7h-7z" fill="#ddd" stroke="#aaa" /></svg>
        </Mode>
        <Mode $w={15} $h={14} $on>T</Mode>
        <label htmlFor="tint">Tint:</label>
        <input id="tint" defaultValue="100" />
        <Flyout aria-label="Tint slider"><Right /></Flyout>
        <Percent>%</Percent>
      </PanelTools>
      <SwatchArea>
        <SwatchList>
          {swatches.map(({ name, fill, lock, mid: Mid, end: End, dim }) => (
            <li key={name}>
              <SwatchRow $on={name === active} $dim={dim} onClick={() => setActive(name)}>
                <Chip $fill={fill} $dim={dim} />
                <span>{name}</span>
                <span>{lock && <NoEdit />}</span>
                <span>{Mid && <Mid />}</span>
                <span>{End && <End />}</span>
              </SwatchRow>
            </li>
          ))}
        </SwatchList>
      </SwatchArea>
      <PanelFoot>
        <FootButton $on aria-label="Show all"><svg width="14" height="12" viewBox="0 0 14 12"><path d="M1 1h6v6H1z" fill="#eee" stroke="#444" /><path d="M5 5h4v5H5zM9 3h4v8H9z" fill="#444" /></svg></FootButton>
        <FootButton aria-label="Colour swatches"><svg width="11" height="11"><path d="M.5.5h10v10H.5z" fill="#888" stroke="#333" /></svg></FootButton>
        <FootButton aria-label="Gradients"><Chip $fill="linear-gradient(90deg, #fff, #000)" /></FootButton>
        <FootButton aria-label="New swatch"><svg width="10" height="10"><path d="M.5.5h9v9h-5l-4-4z" fill="#fff" stroke="#333" /><path d="M1 5h4v4z" fill="#555" /></svg></FootButton>
        <FootButton aria-label="Delete swatch"><Trash2 size={11} /></FootButton>
      </PanelFoot>
      <Grip $margin="2px auto 3px" />
    </Panel>
  );
};

const PanelDock = () => (
  <Dock>
    <DockHead $side="flex-end"><Double flip /></DockHead>
    {dockGroups.map(items => (
      <DockGroup key={items[0]} $tall={items.length > 1}>
        <DockGrip />
        {items.map(item => (
          <DockItem key={item} $on={item === 'Swatches'}>
            <svg width="22" height="20" viewBox="0 0 22 20" fill="none">{dockIcons[item]}</svg>
            {item}
          </DockItem>
        ))}
      </DockGroup>
    ))}
  </Dock>
);

const Controls = () => (
  <ControlBar>
    <Group $first $cols="14px 34px 150px 24px 78px" $pad="0 13px 0 0">
      <Tall><VGrip /></Tall>
      <Glyph $on $sans $weight={400}>A</Glyph>
      <Combo label="Font family" value="Times" />
      <Glyph $size={16}><small>T</small>T</Glyph>
      <Spinner label="Font size" value="11 pt" drop />
      <Glyph>¶</Glyph>
      <Combo label="Font style" value="Regular" />
      <Glyph aria-label="Leading icon">
        <svg width="18" height="18" viewBox="0 0 18 18" fill="#333" fontFamily={UI} fontSize="9">
          <text x="8" y="8">A</text><text x="8" y="17">A</text><path d="M6 9h10M4 10v8M2 12l2-2 2 2M2 16l2 2 2-2" stroke="#333" fill="none" />
        </svg>
      </Glyph>
      <Spinner label="Leading" value="(13.2 pt)" drop />
    </Group>
    <Group $cols="28px 24px 21px">
      <Glyph $size={13}>TT</Glyph>
      <Glyph $sub="flex-start">T<small>1</small></Glyph>
      <Glyph $line="underline">T</Glyph>
      <Glyph>T<small>T</small></Glyph>
      <Glyph>T<small>1</small></Glyph>
      <Glyph $line="line-through">T</Glyph>
    </Group>
    <Group $cols="28px 72px" $pad="0 7px 0 0">
      <Glyph $sans $weight={400} $size={12}>A/V</Glyph>
      <Spinner label="Kerning" value="(0)" drop />
      <Glyph $sans $size={11} $line="underline" $on $w={18}>AV</Glyph>
      <Spinner label="Tracking" value="0" drop />
    </Group>
    <Group $cols="28px 73px 28px 73px" $pad="0 8px 0 0">
      <Glyph $size={17}><svg width="5" height="14" viewBox="0 0 5 14" fill="none" stroke="#333"><path d="M2.500 1v12M.5 3l2-2 2 2M.5 11l2 2 2-2" /></svg>T</Glyph>
      <Spinner label="Vertical scale" value="100%" drop />
      <Glyph $size={17} $line="underline">T</Glyph>
      <Spinner label="Horizontal scale" value="100%" drop />
      <Glyph $sans $weight={400} $size={11} $sub="flex-start">A<small>a</small></Glyph>
      <Spinner label="Baseline shift" value="0 pt" />
      <Glyph $size={17} $italic>T</Glyph>
      <Spinner label="Skew" value="0°" />
    </Group>
    <Group $cols="19px 14px" $pad="0 5px">
      <ColorButton>T</ColorButton>
      <Flyout aria-label="Fill list"><Right /></Flyout>
      <ColorButton aria-label="Stroke"><svg width="16" height="16"><path d="M1 15L15 1" stroke="#c8102e" strokeWidth="2" /></svg></ColorButton>
      <Flyout aria-label="Stroke list"><Right /></Flyout>
    </Group>
    <Group $cols="24px 136px" $pad="0 6px 0 0">
      <Glyph $sans $size={16}>A.</Glyph>
      <Select label="Character style" value="[None]" />
      <span />
      <Select label="Language" value="English: USA" />
    </Group>
    <Group $cols="3px" />
    <Group $cols="22px 22px 22px 22px" $pad="0 2px 0 5px">
      <Glyph aria-label="Align left"><Lines rows={LEFT} /></Glyph>
      <Glyph aria-label="Align centre"><Lines rows={CENTER} /></Glyph>
      <Glyph aria-label="Align right"><Lines rows={RIGHT} /></Glyph>
      <Glyph aria-label="Align towards spine"><Lines rows={RIGHT} extra="M17 1v14" /></Glyph>
      <Glyph $on aria-label="Justify left"><Lines rows={JLEFT} /></Glyph>
      <Glyph aria-label="Justify centre"><Lines rows={JCENTER} /></Glyph>
      <Glyph aria-label="Justify all"><Lines rows={FULL} /></Glyph>
      <Glyph aria-label="Align away from spine"><Lines rows={LEFT} extra="M17 1v14" /></Glyph>
    </Group>
    <Group $cols="28px 62px 29px 62px" $pad="0 4px 0 1px">
      <Glyph><Lines rows={INDENT} extra="M7.500 1v14M0 8h5M3 6l2 2-2 2" /></Glyph>
      <Spinner label="Left indent" value="0 mm" />
      <Glyph><Lines rows={OUTDENT} extra="M10.500 1v14M12 8h5M14 6l-2 2 2 2" /></Glyph>
      <Spinner label="Right indent" value="0 mm" />
      <Glyph><Lines rows={INDENT} extra="M1 3h5M4 1l2 2-2 2" /></Glyph>
      <Spinner label="First line indent" value="0 mm" />
      <Glyph><Lines rows={OUTDENT} extra="M12 13h5M14 11l-2 2 2 2" /></Glyph>
      <Spinner label="Last line indent" value="0 mm" />
    </Group>
    <Group $cols="28px 62px 29px 62px" $pad="0 4px 0 1px">
      <Glyph><Lines rows={[[5, 12], [5, 12], [7, 10], [7, 8], [7, 10]]} extra="M1 3h5M4 1l2 2-2 2" /></Glyph>
      <Spinner label="Space before" value="0 mm" />
      <Glyph><Lines rows={[[7, 10], [7, 8], [7, 10], [5, 12], [5, 12]]} extra="M1 13h5M4 11l2 2-2 2" /></Glyph>
      <Spinner label="Space after" value="0 mm" />
      <Glyph $sans $size={11}>A<Lines rows={OUTDENT} /></Glyph>
      <Spinner label="Drop cap lines" value="0" />
      <Glyph $sans $size={11} $line="underline overline">Aa</Glyph>
      <Spinner label="Drop cap characters" value="0" />
    </Group>
    <Group $cols="30px">
      <Glyph aria-label="Bulleted list"><Lines rows={INDENT.map(() => [7, 9])} extra="M3 1.500h2M3 7.500h2M3 13.500h2" /></Glyph>
      <Glyph aria-label="Numbered list"><Lines rows={INDENT.map(() => [7, 9])} extra="M4 0v4M3 6h2M4 10v5" /></Glyph>
    </Group>
    <Group $cols="23px 137px" $pad="0 5px 0 0">
      <Glyph>¶.</Glyph>
      <Select label="Paragraph style" value="Body A+" />
      <HyphenRow>
        <Check>
          <Tick>
            <input type="checkbox" defaultChecked />
            <svg width="8" height="8" viewBox="0 0 8 8"><path d="M1 4l2 3 4-6" fill="none" stroke="#fff" strokeWidth="1.500" /></svg>
          </Tick>
          Hyphenate
        </Check>
        <Glyph $size={13}>¶<svg width="6" height="10" viewBox="0 0 6 10" fill="none" stroke="#333"><path d="M0 9l5-8M2 5h4" /></svg></Glyph>
      </HyphenRow>
    </Group>
    <Group $cols="30px">
      <Glyph $on $w={24} aria-label="Do not align to grid"><Lines rows={[[1, 7], [1, 7], [1, 7], [1, 7]]} extra="M10 2.500h7M10 5.500h7M10 8.500h7M10 11.500h7" /></Glyph>
      <Glyph $w={24} aria-label="Align to grid"><Lines rows={[[1, 7], [1, 7], [1, 7], [1, 7]]} extra="M10 1.500h7M10 4.500h7M10 7.500h7M10 10.500h7" /></Glyph>
    </Group>
    <Group $cols="24px 46px 22px 72px" $pad="0 6px 0 0">
      <ColumnIcon><svg width="15" height="14" fill="#fff" stroke="#333"><path d="M.5.5h14v13H.5zM5.500.5v13M9.500.5v13" /></svg></ColumnIcon>
      <Spinner label="Columns" value="1" />
      <ColumnIcon><Lines rows={[[0, 0], [2, 14], [2, 6], [2, 6], [2, 6]]} extra="M2 1.500h14M10 7.500h6M10 10.500h6M10 13.500h6" /></ColumnIcon>
      <Select label="Span columns" value="None" />
      <ColumnIcon><svg width="15" height="15" fill="#fff" stroke="#222"><path d="M.5.5h14v14H.5zM6.500 0v15M9.500 0v15M2 7.500h4M10 7.500h4" /></svg></ColumnIcon>
      <Spinner label="Gutter" value="4.028" />
      <Glyph $size={12}>I<small>x:</small></Glyph>
      <Field $off><input aria-label="Cursor position" defaultValue="133.181 mm" readOnly /></Field>
    </Group>
    <Group $cols="37px">
      <Tall><Zap size={17} fill="#444" strokeWidth={1} color="#444" /></Tall>
    </Group>
    <Group $cols="25px">
      <Tall><MenuIcon /></Tall>
    </Group>
  </ControlBar>
);

const App = () => (
  <>
    <GlobalStyle />
    <Window>
      <TitleBar>
        <Light aria-label="Close" $color="radial-gradient(#400 2px, #f0685a 3px)" $edge="#d5504a" />
        <Light aria-label="Minimise" $color="#f6be32" $edge="#dca028" />
        <Light aria-label="Zoom window" $color="#59c83b" $edge="#47ac2f" />
        <Logo>Id</Logo>
        <Bridge>Br</Bridge>
        <Zoom>106.3% <Down /></Zoom>
        <ViewButton aria-label="View options">
          <svg width="18" height="17" viewBox="0 0 18 17"><path d="M0 0h18v4H4v13H0z" fill="#444" /><path d="M5.500 5.500h12v11h-12z" fill="#eee" stroke="#555" /><path d="M2 1v3M6 1v2M9 1v2M12 1v2M15 1v2M1 8h2M1 11h2M1 14h2" stroke="#bbb" /></svg>
          <Down />
        </ViewButton>
        <ViewButton aria-label="Screen mode">
          <svg width="18" height="16" viewBox="0 0 18 16"><path d="M.5 4V.5H4M14 .5h3.500V4M17.500 12v3.500H14M4 15.500H.5V12" fill="none" stroke="#444" /><path d="M3.500 3.500h11v9h-11z" fill="#888" stroke="#444" /></svg>
          <Down />
        </ViewButton>
        <ViewButton aria-label="Arrange documents">
          <svg width="18" height="16" viewBox="0 0 18 16"><path d="M.5.5h17v15H.5z" fill="#eee" stroke="#333" /><path d="M2 2h8v12H2zM11 2h5v5h-5zM11 8h5v6h-5z" fill="#777" /></svg>
          <Down />
        </ViewButton>
        <Account>davids <Down s={5} /></Account>
        <SearchBox>
          <svg width="13" height="13" viewBox="0 0 13 13" fill="none" stroke="#444" strokeWidth="1.300"><circle cx="8" cy="5" r="4" /><path d="M5 8l-4 4" /></svg>
          <input aria-label="Search" />
        </SearchBox>
      </TitleBar>
      <Middle>
        <Toolbox />
        <Workspace>
          <TabBar>
            <Tab>
              <svg width="7" height="7" viewBox="0 0 7 7"><path d="M1 1l5 5M6 1L1 6" stroke="#333" strokeWidth="1.300" /></svg>
              *+MASTER.indd @ 106%
            </Tab>
          </TabBar>
          <View>
            <Corner>
              <svg width="15" height="16" stroke="#000" strokeDasharray="1 1"><path d="M5.500 0v16M0 6.500h15" /></svg>
            </Corner>
            <TopRuler><Ruler origin={538} from={-124} to={260} wrap={180} /></TopRuler>
            <SideRuler><Ruler vertical origin={157} from={-36} to={247} /></SideRuler>
            <Pasteboard><DocumentPage /></Pasteboard>
            <ScrollTrack><VThumb /></ScrollTrack>
          </View>
          <Status>
            <StatusTools>
              <button aria-label="First page"><Right bar dim flip /></button>
              <button aria-label="Previous page"><Right dim flip /></button>
              <PageField aria-label="Page" defaultValue="19" />
              <button aria-label="Page list"><Down /></button>
              <button aria-label="Next page"><Right /></button>
              <button aria-label="Last page"><Right bar /></button>
              <button aria-label="Open"><svg width="16" height="12" viewBox="0 0 16 12"><circle cx="7" cy="6" r="5.500" fill="#bbb" stroke="#666" /><path d="M5 3h3l2 2v4H5z" fill="#fff" stroke="#333" /></svg></button>
              <button><svg width="10" height="10"><circle cx="5" cy="5" r="4.500" fill="#c6c6c6" stroke="#aaa" /></svg>Preflight off <Down s={6} /></button>
            </StatusTools>
            <HTrack><HThumb /></HTrack>
            <SplitView />
          </Status>
          <SwatchesPanel />
        </Workspace>
        <PanelDock />
      </Middle>
      <Controls />
    </Window>
  </>
);

export default App;
